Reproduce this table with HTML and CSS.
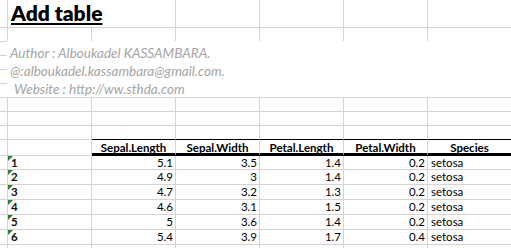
FILE: index.html
```html
<!DOCTYPE html>
<html>
<head>
<meta charset="utf-8">
<link rel="stylesheet" href="styles.css">
</head>
<body>
<div class="sheet">
  <!-- row 1 -->
  <div class="c"></div><div class="c title-cell"><span class="title">Add table</span></div><div class="c"></div><div class="c"></div><div class="c"></div><div class="c"></div>
  <!-- rows 2-8 -->
  <div class="c"></div><div class="c"></div><div class="c"></div><div class="c"></div><div class="c"></div><div class="c"></div><div class="c"></div>
  <div class="c"></div><div class="c"></div><div class="c"></div><div class="c"></div><div class="c"></div><div class="c"></div><div class="c"></div>
  <div class="c"></div><div class="c"></div><div class="c"></div><div class="c"></div><div class="c"></div><div class="c"></div><div class="c"></div>
  <div class="c"></div><div class="c"></div><div class="c"></div><div class="c"></div><div class="c"></div><div class="c"></div><div class="c"></div>
  <div class="c"></div><div class="c"></div><div class="c"></div><div class="c"></div><div class="c"></div><div class="c"></div><div class="c"></div>
  <div class="c"></div><div class="c"></div><div class="c"></div><div class="c"></div><div class="c"></div><div class="c"></div><div class="c"></div>
  <div class="c"></div><div class="c"></div><div class="c"></div><div class="c"></div><div class="c"></div><div class="c"></div><div class="c"></div>
  <!-- row 9 -->
  <div class="c"></div><div class="c"></div><div class="c top"></div><div class="c top"></div><div class="c top"></div><div class="c top"></div><div class="c top"></div>
  <!-- header -->
  <div class="c"></div><div class="c"></div>
  <div class="c h">Sepal.Length</div><div class="c h">Sepal.Width</div><div class="c h">Petal.Length</div><div class="c h">Petal.Width</div><div class="c h">Species</div>
  <!-- data -->
  <div class="c"></div><div class="c rn">1</div><div class="c n">5.1</div><div class="c n">3.5</div><div class="c n">1.4</div><div class="c n">0.2</div><div class="c s">setosa</div>
  <div class="c"></div><div class="c rn">2</div><div class="c n">4.9</div><div class="c n">3</div><div class="c n">1.4</div><div class="c n">0.2</div><div class="c s">setosa</div>
  <div class="c"></div><div class="c rn">3</div><div class="c n">4.7</div><div class="c n">3.2</div><div class="c n">1.3</div><div class="c n">0.2</div><div class="c s">setosa</div>
  <div class="c"></div><div class="c rn">4</div><div class="c n">4.6</div><div class="c n">3.1</div><div class="c n">1.5</div><div class="c n">0.2</div><div class="c s">setosa</div>
  <div class="c"></div><div class="c rn">5</div><div class="c n">5</div><div class="c n">3.6</div><div class="c n">1.4</div><div class="c n">0.2</div><div class="c s">setosa</div>
  <div class="c"></div><div class="c rn">6</div><div class="c n">5.4</div><div class="c n">3.9</div><div class="c n">1.7</div><div class="c n">0.4</div><div class="c s">setosa</div>
  <!-- partial row -->
  <div class="c"></div><div class="c"></div><div class="c"></div><div class="c"></div><div class="c"></div><div class="c"></div><div class="c"></div>
</div>
<div class="textbox">
  <div class="tb-line">Author : Alboukadel KASSAMBARA.</div>
  <div class="tb-line">@:alboukadel.kassambara@gmail.com.</div>
  <div class="tb-line tb-indent">Website : http://ww.sthda.com</div>
</div>
</body>
</html>
```
FILE: styles.css
```css
html, body {
  margin: 0;
  padding: 0;
  background: #fff;
  overflow: hidden;
}
body {
  position: relative;
  width: 511px;
  height: 248px;
  font-family: Lato, "Open Sans", sans-serif;
}
.sheet {
  display: grid;
  grid-template-columns: 8px repeat(6, 84px);
  grid-template-rows: 28px repeat(8, 14px) 16px 14px repeat(6, 15px);
}
.c {
  box-sizing: border-box;
  border-right: 1px solid #d4d4d4;
  border-bottom: 1px solid #d4d4d4;
  font-size: 11.5px;
  line-height: 13px;
  color: #000;
  white-space: nowrap;
  position: relative;
}
.title-cell {
  grid-column: span 2;
  padding-left: 3px;
  padding-top: 0;
}
.title {
  font-size: 21px;
  font-weight: 800;
  line-height: 25px;
  text-decoration: underline;
  text-decoration-thickness: 2px;
  text-underline-offset: 2px;
}
.top {
  border-bottom-color: #000;
}
.h {
  font-weight: 700;
  text-align: center;
  border-bottom: 3px solid #000;
  padding-top: 1px;
}
.n {
  text-align: right;
  padding-right: 2px;
}
.s {
  padding-left: 3px;
}
.rn {
  font-weight: 700;
  padding-left: 3px;
  color: #111;
}
.rn::before {
  content: "";
  position: absolute;
  left: 0;
  top: 0;
  border-top: 5px solid #2f7d32;
  border-right: 5px solid transparent;
}
.textbox {
  position: absolute;
  left: 7px;
  top: 41px;
  width: 504px;
  height: 56px;
  background: #fff;
  box-sizing: border-box;
  padding-left: 3px;
  padding-top: 3px;
}
.tb-line {
  font-size: 13.5px;
  font-style: italic;
  color: #a5a5a5;
  line-height: 18px;
  white-space: nowrap;
}
.tb-indent {
  padding-left: 4px;
}
```
